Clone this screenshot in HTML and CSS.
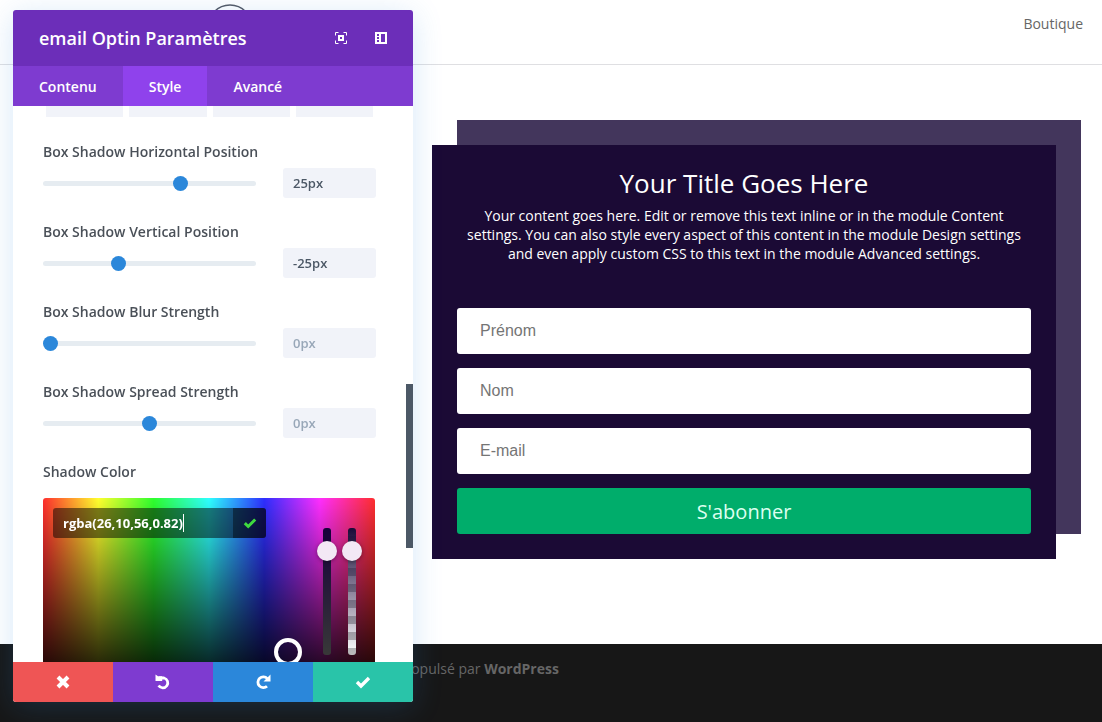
FILE: index.html
```html
<!DOCTYPE html>
<html lang="fr">
<head>
  <meta charset="UTF-8">
  <title>email Optin Paramètres</title>
  <link rel="stylesheet" href="styles.css">
</head>
<body>

  <!-- SITE HEADER -->
  <header class="site-header">
    <svg class="logo" width="46" height="46" viewBox="0 0 46 46"><circle cx="23" cy="23" r="22" fill="none" stroke="#555a66" stroke-width="1.5"/></svg>
    <nav>
      <a href="#">Boutique</a>
    </nav>
  </header>

  <!-- EMAIL OPTIN -->
  <main class="page">
    <section class="optin">
      <h2>Your Title Goes Here</h2>
      <p>Your content goes here. Edit or remove this text inline or in the module Content settings. You can also style every aspect of this content in the module Design settings and even apply custom CSS to this text in the module Advanced settings.</p>
      <form class="optin-form">
        <input type="text" placeholder="Prénom" aria-label="Prénom">
        <input type="text" placeholder="Nom" aria-label="Nom">
        <input type="email" placeholder="E-mail" aria-label="E-mail">
        <button type="submit">S'abonner</button>
      </form>
    </section>
  </main>

  <footer class="site-footer">
    Propulsé par <a href="#">WordPress</a>
  </footer>

  <!-- SETTINGS MODAL -->
  <div class="modal">
    <div class="modal-header">
      <h1>email Optin Paramètres</h1>
      <button type="button" class="icon-btn" aria-label="Agrandir">
        <svg width="12" height="12" viewBox="0 0 12 12">
          <path d="M0.5 3.5v-3h3M8.5 0.5h3v3M11.5 8.5v3h-3M3.5 11.5h-3v-3" fill="none" stroke="#fff"/>
          <rect x="4" y="4" width="4" height="4" fill="none" stroke="#fff" stroke-width="2"/>
        </svg>
      </button>
      <button type="button" class="icon-btn" aria-label="Ancrer">
        <svg width="12" height="12" viewBox="0 0 12 12">
          <path fill="#fff" fill-rule="evenodd" d="M0 0h12v12H0zM6 2v8h4V2zM2 2v2h2V2zM2 5v2h2V5zM2 8v2h2V8z"/>
        </svg>
      </button>
    </div>

    <div class="tabs">
      <button type="button">Contenu</button>
      <button type="button" class="active">Style</button>
      <button type="button">Avancé</button>
    </div>

    <div class="modal-body">
      <div class="presets"><span></span><span></span><span></span><span></span></div>

      <div class="field">
        <label for="shadow-h">Box Shadow Horizontal Position</label>
        <div class="field-row">
          <input type="range" id="shadow-h" min="-80" max="80" value="25">
          <input type="text" value="25px" aria-label="Horizontal Position">
        </div>
      </div>

      <div class="field">
        <label for="shadow-v">Box Shadow Vertical Position</label>
        <div class="field-row">
          <input type="range" id="shadow-v" min="-80" max="80" value="-25">
          <input type="text" value="-25px" aria-label="Vertical Position">
        </div>
      </div>

      <div class="field">
        <label for="shadow-blur">Box Shadow Blur Strength</label>
        <div class="field-row">
          <input type="range" id="shadow-blur" min="0" max="80" value="0">
          <input type="text" placeholder="0px" aria-label="Blur Strength">
        </div>
      </div>

      <div class="field">
        <label for="shadow-spread">Box Shadow Spread Strength</label>
        <div class="field-row">
          <input type="range" id="shadow-spread" min="-80" max="80" value="0">
          <input type="text" placeholder="0px" aria-label="Spread Strength">
        </div>
      </div>

      <div class="field">
        <label for="shadow-color">Shadow Color</label>
        <div class="picker">
          <div class="color-value">
            <input type="text" id="shadow-color" value="rgba(26,10,56,0.82)">
            <span class="caret"></span>
            <button type="button" aria-label="Valider la couleur">
              <svg width="14" height="12" viewBox="0 0 14 12"><path d="M1.8 6.2l3.4 3.3 7-7" fill="none" stroke="#3fd93f" stroke-width="3"/></svg>
            </button>
          </div>
          <div class="strips">
            <input type="range" class="strip strip-sat" value="88" aria-label="Saturation">
            <input type="range" class="strip strip-alpha" value="88" aria-label="Opacité">
          </div>
          <span class="handle"></span>
        </div>
      </div>

      <div class="scrollbar"></div>
    </div>

    <div class="modal-actions">
      <button type="button" class="cancel" aria-label="Annuler">
        <svg width="14" height="14" viewBox="0 0 14 14"><path d="M2 2l10 10M12 2L2 12" stroke="#fff" stroke-width="4"/></svg>
      </button>
      <button type="button" class="undo" aria-label="Défaire">
        <svg width="16" height="16" viewBox="0 0 16 16">
          <path d="M4 4H9a5 5 0 1 1-5.4 7.6" fill="none" stroke="#fff" stroke-width="2.8"/>
          <path d="M0.5 0.5l2.5 1.8h4.2v4.7H0.5z" fill="#fff"/>
        </svg>
      </button>
      <button type="button" class="redo" aria-label="Refaire">
        <svg width="16" height="16" viewBox="0 0 16 16">
          <path d="M12.3 4.6A5.4 5.4 0 1 0 12 12.2" fill="none" stroke="#fff" stroke-width="2.8"/>
          <path d="M15.5 0.5v7h-7z" fill="#fff"/>
        </svg>
      </button>
      <button type="button" class="save" aria-label="Enregistrer">
        <svg width="16" height="14" viewBox="0 0 16 14"><path d="M2 7l4 4 8-8" fill="none" stroke="#fff" stroke-width="3.4"/></svg>
      </button>
    </div>
  </div>

</body>
</html>
```

FILE: styles.css
```css
* {
  box-sizing: border-box;
}

body {
  margin: 0;
  min-height: 100vh;
  display: flex;
  flex-direction: column;
  font-family: "Open Sans", Arial, sans-serif;
  font-size: 14px;
  background-color: #fff;
  color: #666;
}

button {
  border: none;
  padding: 0;
  background: none;
  font-family: inherit;
  cursor: pointer;
}

/* Site */
.site-header {
  height: 65px;
  padding: 4px 19px 0 207px;
  display: flex;
  justify-content: space-between;
  align-items: flex-start;
  border-bottom: 1px solid #dfdfe2;
}

.site-header nav {
  padding-top: 10px;
  line-height: 20px;
}

.site-header a {
  color: #666;
  font-weight: 500;
  text-decoration: none;
}

.page {
  padding: 80px 46px 85px 432px;
}

.optin {
  padding: 25px;
  background-color: #1b0a35;
  box-shadow: 25px -25px 0 0 rgba(26, 10, 56, 0.82);
  color: #fff;
  text-align: center;
}

.optin h2 {
  margin: 0;
  padding-bottom: 10px;
  font-size: 26px;
  font-weight: 400;
  line-height: 26px;
}

.optin p {
  margin: 0 0 45px;
  font-size: 14px;
  line-height: 19px;
}

.optin-form {
  display: flex;
  flex-direction: column;
  gap: 14px;
}

.optin-form input {
  height: 46px;
  padding: 0 23px;
  border: none;
  border-radius: 3px;
  background-color: #fff;
  font-family: "Liberation Sans", Arial, sans-serif;
  font-size: 16px;
}

.optin-form input::placeholder {
  color: #757575;
}

.optin-form button {
  height: 46px;
  border-radius: 3px;
  background-color: #00ad6b;
  color: #dcfff0;
  font-size: 20px;
}

.site-footer {
  flex: 1;
  padding: 15px 0 0 397px;
  background-color: #171717;
  line-height: 20px;
}

.site-footer a {
  color: #666;
  font-weight: 700;
  text-decoration: none;
}

/* Settings modal */
.modal {
  position: fixed;
  top: 10px;
  left: 13px;
  bottom: 20px;
  width: 400px;
  display: flex;
  flex-direction: column;
  overflow: hidden;
  border-radius: 3px;
  background-color: #fff;
  box-shadow: 0 5px 30px rgba(43, 135, 218, 0.2);
}

.modal-header {
  height: 56px;
  padding: 0 26px;
  display: flex;
  align-items: center;
  gap: 28px;
  background-color: #6c2eb9;
}

.modal-header h1 {
  flex: 1;
  margin: 0;
  font-size: 18px;
  font-weight: 600;
  color: #fff;
}

.icon-btn {
  display: flex;
}

.tabs {
  display: flex;
  background-color: #7e3bd0;
}

.tabs button {
  height: 40px;
  padding: 0 26px;
  color: #fff;
  font-size: 14px;
  font-weight: 600;
}

.tabs .active {
  background-color: #8f42ec;
}

.modal-body {
  position: relative;
  flex: 1;
  min-height: 0;
  padding: 0 37px 0 30px;
  overflow: hidden;
}

.presets {
  display: grid;
  grid-template-columns: repeat(4, 1fr);
  gap: 6px;
  height: 11px;
  margin: 0 3px 27px;
}

.presets span {
  background-color: #f1f3f9;
}

.field {
  margin-bottom: 26px;
}

.field label {
  display: block;
  margin-bottom: 8px;
  color: #4a5058;
  font-weight: 600;
  line-height: 16px;
}

.field-row {
  display: flex;
  align-items: center;
  gap: 27px;
}

.field-row input[type="range"] {
  flex: 1;
  min-width: 0;
  height: 15px;
  margin: 0;
  appearance: none;
  background: none;
}

.field-row input[type="range"]::-webkit-slider-runnable-track {
  height: 5px;
  border-radius: 3px;
  background-color: #e6ecf1;
}

.field-row input[type="range"]::-webkit-slider-thumb {
  appearance: none;
  width: 15px;
  height: 15px;
  margin-top: -5px;
  border-radius: 50%;
  background-color: #2b87da;
}

.field-row input[type="text"] {
  width: 93px;
  height: 30px;
  padding: 0 10px;
  border: none;
  border-radius: 3px;
  background-color: #f1f3f9;
  color: #4c5866;
  font-family: inherit;
  font-size: 13px;
  font-weight: 600;
}

.field-row input[type="text"]::placeholder {
  color: #98a7b8;
}

/* Color picker */
.picker {
  position: relative;
  display: flex;
  justify-content: space-between;
  align-items: flex-start;
  height: 196px;
  margin: 18px 1px 0 0;
  padding: 10px 13px 0 10px;
  border-radius: 3px;
  background:
    linear-gradient(to bottom, transparent, #000),
    linear-gradient(to right, #ff2e2e, #ffff2e, #2eff2e, #2effff, #2e2eff, #ff2eff, #ff2e2e);
}

.color-value {
  width: 213px;
  height: 30px;
  display: flex;
  align-items: center;
  border-radius: 3px;
  overflow: hidden;
  background-color: rgba(0, 0, 0, 0.5);
}

.color-value input {
  width: 130px;
  padding: 0 0 0 10px;
  border: none;
  background: none;
  color: #fff;
  font-family: inherit;
  font-size: 13px;
  font-weight: 700;
}

.caret {
  width: 1px;
  height: 18px;
  background-color: #fff;
}

.color-value button {
  display: flex;
  align-items: center;
  justify-content: center;
  width: 33px;
  height: 30px;
  margin-left: auto;
  background-color: rgba(0, 0, 0, 0.4);
}

.strips {
  display: flex;
  gap: 5px;
  padding-top: 20px;
}

.strip {
  width: 20px;
  height: 127px;
  margin: 0;
  appearance: none;
  background: none;
  writing-mode: vertical-lr;
  direction: rtl;
}

.strip::-webkit-slider-runnable-track {
  width: 8px;
  height: 127px;
  border-radius: 3px;
}

.strip-sat::-webkit-slider-runnable-track {
  background: linear-gradient(to bottom, #16003a, #383838);
}

.strip-alpha::-webkit-slider-runnable-track {
  background:
    linear-gradient(to bottom, #1a0a38, transparent),
    repeating-linear-gradient(to bottom, #fff 0 8px, #bbb 8px 16px);
}

.strip::-webkit-slider-thumb {
  appearance: none;
  width: 20px;
  height: 20px;
  margin-left: -6px;
  border-radius: 50%;
  background-color: #f3e8f5;
  box-shadow: 0 1px 4px rgba(0, 0, 0, 0.4);
}

.handle {
  position: absolute;
  top: 140px;
  left: 231px;
  width: 28px;
  height: 28px;
  border: 4px solid #fff;
  border-radius: 50%;
}

.scrollbar {
  position: absolute;
  top: 278px;
  right: 0;
  width: 7px;
  height: 164px;
  background-color: #4c5866;
}

/* Bottom actions */
.modal-actions {
  display: grid;
  grid-template-columns: repeat(4, 1fr);
}

.modal-actions button {
  display: flex;
  align-items: center;
  justify-content: center;
  height: 40px;
}

.cancel {
  background-color: #ef5555;
}

.undo {
  background-color: #7e3bd0;
}

.redo {
  background-color: #2b87da;
}

.save {
  background-color: #29c4a9;
}
```
